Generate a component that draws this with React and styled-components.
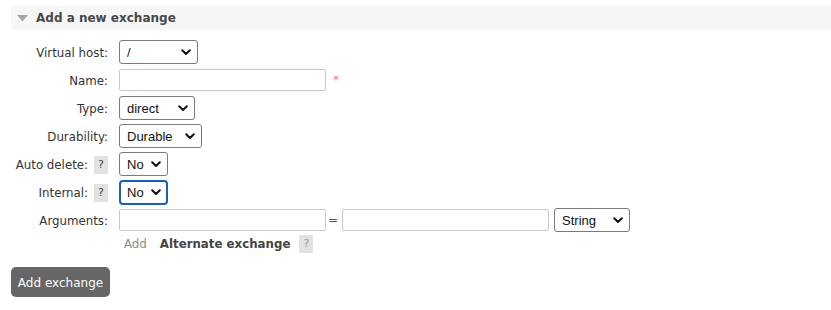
import React from 'react';
import styled, { createGlobalStyle, css } from 'styled-components';

const GlobalStyle = createGlobalStyle`
  body {
    margin: 0;
    background: #fff;
    font-family: "DejaVu Sans", Verdana, sans-serif;
    font-size: 11.8px;
    color: #484848;
  }
`;

const Page = styled.div`
  padding: 6px 0 0 11px;
`;

const SectionHeader = styled.div`
  display: flex;
  align-items: center;
  height: 24px;
  background: #f6f6f6;
  border-radius: 4px 0 0 4px;
  padding-left: 6px;
  gap: 8px;
`;

const Title = styled.h2`
  margin: 0;
  font-size: 12px;
  font-weight: bold;
  color: #484848;
`;

const FormGrid = styled.div`
  display: grid;
  grid-template-columns: 97px auto;
  grid-auto-rows: 28px;
  column-gap: 11px;
  align-items: center;
  margin-top: 8px;
`;

const Label = styled.label`
  display: flex;
  justify-content: flex-end;
  align-items: center;
  gap: 6px;
  padding-top: 2px;
  color: #333;
  white-space: nowrap;
`;

const Cell = styled.div`
  display: flex;
  align-items: center;
`;

const Help = styled.span`
  display: inline-flex;
  align-items: center;
  justify-content: center;
  width: 14px;
  height: 18px;
  margin-top: -1px;
  background: #e2e2e2;
  color: ${p => (p.$faint ? '#999' : '#444')};
  font-size: 11px;
`;

const TextInput = styled.input`
  box-sizing: border-box;
  width: 207px;
  height: 22px;
  border: 1px solid #c8c8c8;
  border-radius: 2px;
  padding: 0 4px;
  font-family: "Liberation Sans", Arial, sans-serif;
  font-size: 13px;
  outline: none;
`;

const Required = styled.span`
  color: #f08080;
  margin-left: 7px;
  font-size: 12px;
`;

const SelectWrap = styled.span`
  position: relative;
  display: inline-flex;
`;

const Select = styled.select`
  appearance: none;
  -webkit-appearance: none;
  box-sizing: border-box;
  width: ${p => p.$w}px;
  height: 24px;
  background: #fff;
  border: 1px solid #7a7a7a;
  border-radius: 3px;
  padding: 0 0 0 7px;
  font-family: "Liberation Sans", Arial, sans-serif;
  font-size: 13px;
  color: #111;
  outline: none;
  ${p =>
    p.$focused &&
    css`
      height: 25px;
      border: 2px solid #1a5fb4;
      border-radius: 4px;
      padding-left: 6px;
    `}
`;

const Chevron = styled.svg`
  position: absolute;
  right: 7px;
  top: 50%;
  margin-top: -3px;
  pointer-events: none;
`;

const Equals = styled.span`
  margin: 0 4px 0 2px;
  color: #555;
  font-size: 12px;
`;

const Spacer = styled.span`
  width: 5px;
`;

const SubRow = styled.div`
  display: flex;
  align-items: center;
  height: 20px;
  margin: 0 0 0 113px;
`;

const AddLink = styled.span`
  color: #8a8a8a;
  margin-right: 13px;
`;

const SubTitle = styled.span`
  font-weight: bold;
  color: #444;
  margin-right: 9px;
`;

const Button = styled.button`
  margin-top: 13px;
  width: 99px;
  height: 30px;
  border: none;
  border-radius: 5px;
  background: #666;
  color: #fff;
  font-family: "DejaVu Sans", Verdana, sans-serif;
  font-size: 12px;
  padding: 1px 0 0;
`;

function Dropdown({ width, value, options, focused }) {
  return (
    <SelectWrap>
      <Select $w={width} $focused={focused} defaultValue={value}>
        {options.map(o => (
          <option key={o}>{o}</option>
        ))}
      </Select>
      <Chevron width="10" height="7" viewBox="0 0 10 7">
        <path d="M1.2 1.3 L5 5 L8.8 1.3" fill="none" stroke="#111" strokeWidth="2" strokeLinecap="round" strokeLinejoin="round" />
      </Chevron>
    </SelectWrap>
  );
}

export default function App() {
  return (
    <Page>
      <GlobalStyle />
      <SectionHeader>
        <svg width="11" height="7" viewBox="0 0 11 7">
          <path d="M0 0 L11 0 L5.5 6.5 Z" fill="#a5a5a5" />
        </svg>
        <Title>Add a new exchange</Title>
      </SectionHeader>

      <FormGrid>
        <Label>Virtual host:</Label>
        <Cell>
          <Dropdown width={79} value="/" options={['/']} />
        </Cell>

        <Label>Name:</Label>
        <Cell>
          <TextInput />
          <Required>*</Required>
        </Cell>

        <Label>Type:</Label>
        <Cell>
          <Dropdown width={76} value="direct" options={['direct', 'fanout', 'headers', 'topic']} />
        </Cell>

        <Label>Durability:</Label>
        <Cell>
          <Dropdown width={83} value="Durable" options={['Durable', 'Transient']} />
        </Cell>

        <Label>
          Auto delete: <Help>?</Help>
        </Label>
        <Cell>
          <Dropdown width={49} value="No" options={['No', 'Yes']} />
        </Cell>

        <Label>
          Internal: <Help>?</Help>
        </Label>
        <Cell>
          <Dropdown width={49} value="No" options={['No', 'Yes']} focused />
        </Cell>

        <Label>Arguments:</Label>
        <Cell>
          <TextInput />
          <Equals>=</Equals>
          <TextInput />
          <Spacer />
          <Dropdown width={76} value="String" options={['String', 'Number', 'Boolean', 'List']} />
        </Cell>
      </FormGrid>

      <SubRow>
        <AddLink>Add</AddLink>
        <SubTitle>Alternate exchange</SubTitle>
        <Help $faint>?</Help>
      </SubRow>

      <Button>Add exchange</Button>
    </Page>
  );
}
